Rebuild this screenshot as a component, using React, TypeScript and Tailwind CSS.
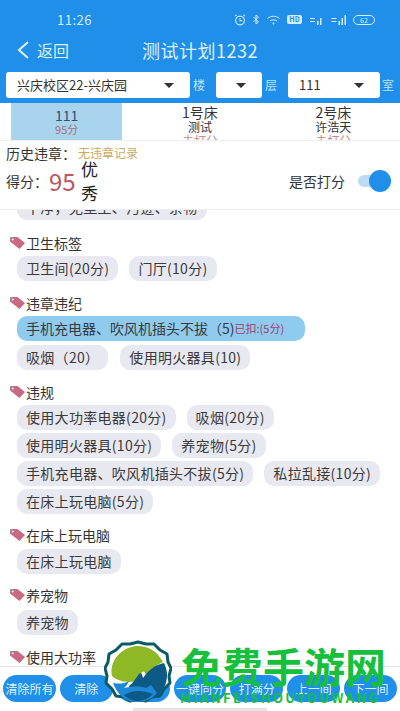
const chip = "rounded-[10px] bg-[#e8e8f0] h-[25px] px-[9px] flex items-center text-[14px] tracking-[0.300px] text-[#3a3a3a] whitespace-nowrap";

function Tag() {
  return (
    <svg width="17" height="14" viewBox="0 0 17 14" className="shrink-0">
      <path d="M1 1h7.500L16 7l-5.500 6L1 5.500z" fill="#c96a85" />
      <path d="M1 1h3L1 4.500z" fill="#8f9aa8" />
      <circle cx="3.800" cy="3.600" r="1" fill="#e9eef2" />
    </svg>
  );
}

function Heading({ text }: { text: string }) {
  return (
    <div className="flex items-center pl-[9px] h-[20px] text-[14px] text-[#333]">
      <Tag />
      <span>{text}</span>
    </div>
  );
}

function Select({ w, label }: { w: string; label?: string }) {
  return (
    <div className={`${w} h-[26px] rounded-[3px] bg-white flex items-center justify-between pl-[11px] pr-[16px] text-[13px] text-[#333]`}>
      <span>{label}</span>
      <span className="w-0 h-0 border-x-[5px] border-x-transparent border-t-[5px] border-t-[#333]" />
    </div>
  );
}

function BedTab({ name, who }: { name: string; who: string }) {
  return (
    <div className="w-1/3 text-[14px] leading-[16px] text-[#333]">
      <div className="pt-[1px]">{name}</div>
      <div className="text-[12px] leading-[14px]">{who}</div>
      <div className="text-[12px] leading-[14px] text-[#c98a8a]">未打分</div>
    </div>
  );
}

function Watermark() {
  return (
    <div className="absolute left-[104px] top-[640px] w-[296px] h-[71px]">
      <svg width="68" height="68" viewBox="0 0 68 68" className="absolute left-0 top-0">
        <path d="M34 2l8 2 8-0 6 6 7 4 1 8 3 6-2 8 1 7-6 6-4 7-8 1-6 4-8-2-8 2-6-4-8-1-4-7-6-6 1-7-2-8 3-6 1-8 7-4 6-6 8 0z" fill="#fff" stroke="#0b5b63" strokeWidth="3" strokeLinejoin="round" />
        <path d="M8 36C5 20 18 7 33 6c12 0 20 5 26 16-7 3-12 8-17 14-1-5-3-6-5-2-2 3-3 5-5 7-7 2-17 1-24-5z" fill="#8fb827" />
        <path d="M25 46c4-3 7-8 10-12 2-2 3 0 4 4 5-7 11-13 21-15 2 4 3 8 3 12 0 9-4 17-11 23H28z" fill="#0d5a86" />
        <path d="M9 43c6 1 11 1 16-2-1 3-3 5-5 7 9-2 16-2 22 0l5-3 6 8c-5 6-12 9-20 9-12 0-20-8-24-19z" fill="#1e88d8" />
        <path d="M20 55c9-5 18-5 29-1-5 5-10 7-15 7-5 0-10-2-14-6z" fill="#0d5a86" />
      </svg>
      <div className="absolute left-[77px] top-[-1px] text-[41px] leading-[52px] font-bold text-[#16c03c] whitespace-nowrap">
        免费手游网
      </div>
      <div className="absolute left-[76px] top-[50px] text-[13px] leading-[16px] font-bold text-[#16c03c] whitespace-nowrap tracking-[2.400px]">
        MIANFEISHOUYOUWANG
      </div>
    </div>
  );
}

export default function App() {
  return (
    <div className="relative w-[400px] h-[711px] overflow-hidden bg-white flex flex-col" style={{ fontFamily: '"Noto Sans CJK SC", "Liberation Sans", sans-serif' }}>
      {/* top bar */}
      <header className="h-[103px] shrink-0 bg-[#1f8fea] text-white flex flex-col">
        <div className="h-[40px] pb-[1px] pl-[57px] pr-[25px] flex items-center justify-between text-[#d5ecfb]">
          <span className="text-[13px] tracking-[0.500px]">11:26</span>
          <div className="flex items-center gap-[6px] text-[8px]">
            <svg width="12" height="12" viewBox="0 0 11 11" fill="none" stroke="currentColor"><circle cx="5.500" cy="6" r="4" /><path d="M5.500 4v2.200h2M1 1.800 2.500.8M10 1.800 8.500.8" /></svg>
            <svg width="8" height="11" viewBox="0 0 7 11" fill="none" stroke="currentColor"><path d="M1 3l5 5-2.500 2V1L6 3 1 8" /></svg>
            <svg width="15" height="10" viewBox="0 0 14 10" fill="none" stroke="currentColor"><path d="M1 3.500c3.500-3 8.500-3 12 0M3.500 6c2-1.500 5-1.500 7 0" /><circle cx="7" cy="8.500" r=".6" /></svg>
            <span className="bg-[#d5ecfb] text-[#1f8fea] rounded-[2px] w-[15px] text-center h-[9px] leading-[9px] text-[7px] font-bold">HD</span>
            <svg width="16" height="10" viewBox="0 0 14 10" fill="currentColor"><path d="M1 3h5v1H1zM1 6h5v1H1zM8 6h1.500v4H8zM11 3h1.500v7H11z" /></svg>
            <svg width="17" height="10" viewBox="0 0 16 10" fill="currentColor"><path d="M1 3h5v1H1zM1 6h5v1H1zM8 6h1.500v4H8zM11 3h1.500v7H11zM14 0h1.500v10H14z" /></svg>
            <span className="border border-[#d5ecfb] rounded-full w-[22px] h-[10px] leading-[8px] text-center text-[7px]">62</span>
          </div>
        </div>
        <div className="relative h-[20px] flex items-center pl-[16px] text-[#dff1fc]">
          <svg width="14" height="20" viewBox="0 0 14 20" fill="none" stroke="currentColor" strokeWidth="2"><path d="M12 2 3 10l9 8" /></svg>
          <span className="ml-[7px] text-[16px]">返回</span>
          <span className="absolute left-0 right-0 text-center text-[18px] tracking-[0.500px]">测试计划1232</span>
        </div>
        <div className="flex items-center pl-[6px] mt-[12px] h-[26px] text-[12px] text-[#bfe3f8]">
          <Select w="w-[184px]" label="兴庆校区22-兴庆园" />
          <span className="w-[26px] pl-[3px]">楼</span>
          <Select w="w-[46px]" />
          <span className="w-[26px] pl-[3px]">层</span>
          <Select w="w-[92px]" label="111" />
          <span className="pl-[2px]">室</span>
        </div>
      </header>

      {/* bed tabs */}
      <div className="h-[37px] shrink-0 flex overflow-hidden text-center">
        <div className="w-1/3 px-[11px]">
          <div className="h-full bg-[#a9d4ee] pt-[4px] text-[14px] leading-[16px] text-[#35506b]">
            <div>111</div>
            <div className="text-[11px] leading-[12px] text-[#a8707f]">95分</div>
          </div>
        </div>
        <BedTab name="1号床" who="测试" />
        <BedTab name="2号床" who="许浩天" />
      </div>

      {/* history + score */}
      <div className="h-[70px] shrink-0 border-y border-[#eee] pl-[6px] pr-[9px] pt-[2px] text-[14px] text-[#333]">
        <div className="flex items-center h-[20px]">
          <span className="w-[72px]">历史违章：</span>
          <span className="text-[12px] text-[#c9ab62]">无违章记录</span>
        </div>
        <div className="flex items-center h-[36px]">
          <span className="w-[43px]">得分：</span>
          <span className="w-[32px] text-[24px] text-[#c0555f]">95</span>
          <span className="w-[17px] text-[17px] leading-[24px] text-[#222]">优秀</span>
          <span className="ml-auto">是否打分</span>
          <div className="relative ml-[13px] w-[33px] h-[12px] rounded-full bg-[#bcdcf5]">
            <span className="absolute right-0 top-[-5px] w-[22px] h-[22px] rounded-full bg-[#1f8fea]" />
          </div>
        </div>
      </div>

      {/* scrolling list */}
      <div className="flex-1 overflow-hidden">
        <div className={`${chip} w-fit -mt-[15px] ml-[17px]`}>干净，无尘土、污迹、杂物</div>

        <div className="mt-[13px]"><Heading text="卫生标签" /></div>
        <div className="flex gap-[11px] pl-[17px] mt-[3px]">
          <div className={chip}>卫生间(20分)</div>
          <div className={chip}>门厅(10分)</div>
        </div>

        <div className="mt-[12px]"><Heading text="违章违纪" /></div>
        <div className="pl-[17px] mt-[3px]">
          <div className={`${chip} w-[288px] !bg-[#8fcbef] !tracking-[0px]`}>
            手机充电器、吹风机插头不拔（5)<span className="text-[11px] text-[#9c3d6a]">已扣:(5分)</span>
          </div>
        </div>
        <div className="flex gap-[12px] pl-[17px] mt-[4px]">
          <div className={chip}>吸烟（20）</div>
          <div className={chip}>使用明火器具(10)</div>
        </div>

        <div className="mt-[12px]"><Heading text="违规" /></div>
        <div className="flex flex-wrap gap-x-[11px] gap-y-[3px] pl-[17px] mt-[3px]">
          <div className={chip}>使用大功率电器(20分)</div>
          <div className={chip}>吸烟(20分)</div>
          <div className={chip}>使用明火器具(10分)</div>
          <div className={chip}>养宠物(5分)</div>
          <div className={chip}>手机充电器、吹风机插头不拔(5分)</div>
          <div className={chip}>私拉乱接(10分)</div>
          <div className={chip}>在床上玩电脑(5分)</div>
        </div>

        <div className="mt-[11px]"><Heading text="在床上玩电脑" /></div>
        <div className="flex pl-[17px] mt-[4px]"><div className={chip}>在床上玩电脑</div></div>

        <div className="mt-[11px]"><Heading text="养宠物" /></div>
        <div className="flex pl-[17px] mt-[5px]"><div className={chip}>养宠物</div></div>

        <div className="mt-[12px]"><Heading text="使用大功率" /></div>
      </div>

      {/* bottom actions */}
      <div className="h-[42px] shrink-0 bg-white border-t border-[#e6e6e6] pt-[8px] px-[3px]">
        <div className="flex gap-[4px] text-[12px] text-[#dff1fc]">
          {["清除所有", "清除", "", "一键同分", "打满分", "上一间", "下一间"].map((b, i) => (
            <div key={i} className="flex-1 h-[27px] rounded-full bg-[#1f8fea] flex items-center justify-center whitespace-nowrap">{b}</div>
          ))}
        </div>
      </div>
      <div className="h-[3px] bg-white shrink-0 flex justify-center">
        <div className="w-[134px] h-[3px] bg-[#e4e4e4]" />
      </div>

      <Watermark />
    </div>
  );
}
